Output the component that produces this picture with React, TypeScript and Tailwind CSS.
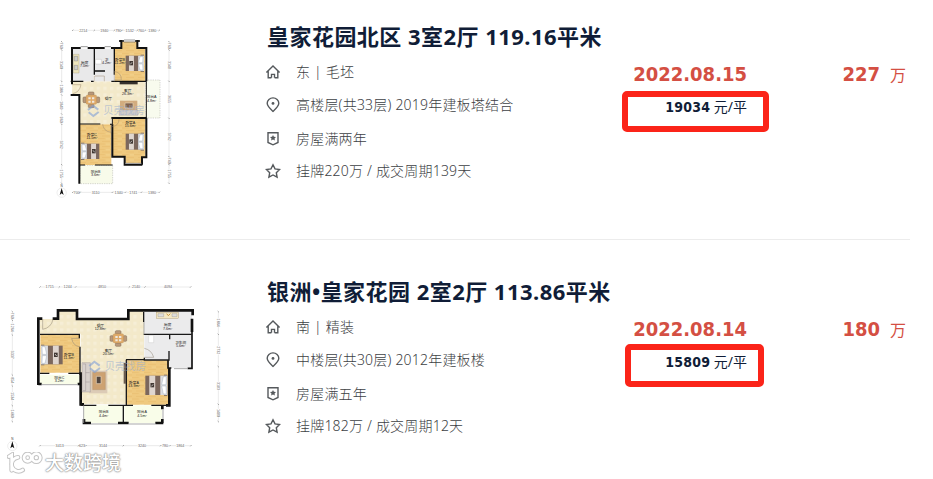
import React from "react";

type Listing = {
  title: string;
  orientation: string;
  floor: string;
  tenure: string;
  deal: string;
  date: string;
  unitPrice: string;
  total: string;
};

const first: Listing = {
  title: "皇家花园北区 3室2厅 119.16平米",
  orientation: "东 | 毛坯",
  floor: "高楼层(共33层) 2019年建板塔结合",
  tenure: "房屋满两年",
  deal: "挂牌220万 / 成交周期139天",
  date: "2022.08.15",
  unitPrice: "19034",
  total: "227",
};

const second: Listing = {
  title: "银洲•皇家花园 2室2厅 113.86平米",
  orientation: "南 | 精装",
  floor: "中楼层(共30层) 2012年建板楼",
  tenure: "房屋满五年",
  deal: "挂牌182万 / 成交周期12天",
  date: "2022.08.14",
  unitPrice: "15809",
  total: "180",
};

/* ---------- icons ---------- */

const iconClass = "h-4 w-4 shrink-0 fill-none stroke-[#55595c] stroke-[1.4]";

function HomeIcon() {
  return (
    <svg viewBox="0 0 16 16" className={iconClass}>
      <path d="M1.400 8.600 8 2l6.600 6.600M3.200 7.200v6.600h3.200M12.800 7.200v6.600H9.600M6.500 13.800v-3.400h3v3.400" />
    </svg>
  );
}

function PinIcon() {
  return (
    <svg viewBox="0 0 16 16" className={iconClass}>
      <path d="M8 14.400C4.600 11.300 2.200 9 2.200 6.300a5.800 5.400 0 0 1 11.600 0C13.800 9 11.400 11.300 8 14.400Z" />
      <circle cx="8" cy="6.400" r="1.400" fill="#55595c" stroke="none" />
    </svg>
  );
}

function BadgeIcon() {
  return (
    <svg viewBox="0 0 16 16" className={iconClass}>
      <path d="M3 1.700h10v9.800L8 13.800l-5-2.300Z" />
      <path d="m8 3.900.9 1.900 2.100.2-1.500 1.500.4 2.100L8 8.500l-1.900 1.100.4-2.100L5 6l2.100-.2Z" fill="#55595c" stroke="none" />
    </svg>
  );
}

function StarIcon() {
  return (
    <svg viewBox="0 0 16 16" className={iconClass}>
      <path d="m8 1.800 2 4.100 4.600.6-3.300 3.200.8 4.500L8 12l-4.100 2.200.8-4.500L1.400 6.500 6 5.900Z" />
    </svg>
  );
}

/* ---------- floor plan parts ---------- */

type Mark = [number, string];

// a dimension line: ticks at `stops`, one number between each pair
function Ruler({ stops, labels, at, vertical = false }: { stops: number[]; labels: Mark[]; at: number; vertical?: boolean }) {
  const from = stops[0];
  const to = stops[stops.length - 1];
  return (
    <g transform={vertical ? `translate(${at} 0) rotate(90)` : `translate(0 ${at})`}>
      <path d={`M${from} 0H${to}`} stroke="#d4d4d4" strokeWidth="1.5" />
      {labels.map(([x, text]) => (
        <g key={x}>
          <rect x={x - text.length * 3.2} y="-5" width={text.length * 6.4} height="10" fill="#fff" />
          <text x={x} y="4" textAnchor="middle" fontSize="11" fill="#666">{text}</text>
        </g>
      ))}
      {stops.map((x) => (
        <path key={x} d={`M${x - 2} 2l4-4`} stroke="#777" strokeWidth="1.8" />
      ))}
    </g>
  );
}

function Room({ x, y, name, area }: { x: number; y: number; name: string; area?: string }) {
  return (
    <g textAnchor="middle" fill="#222" fontSize="11">
      <text x={x} y={y}>{name}</text>
      {area && <text x={x} y={y + 10}>{area}</text>}
    </g>
  );
}

// pillows on the left; flip for beds against the right wall
function Bed({ x, y, w, h, flip = false }: { x: number; y: number; w: number; h: number; flip?: boolean }) {
  return (
    <g transform={flip ? `translate(${x + w} ${y}) scale(-1 1)` : `translate(${x} ${y})`}>
      <rect y="-3" width="10" height={h + 6} fill="#8b7966" />
      <rect width={w} height={h} fill="#7b675d" />
      <rect width={w * 0.32} height={h} fill="#dcdde0" />
      <path d={`M3 3h9l5 ${h / 2 - 5}H4ZM3 ${h - 3}h9l5 -${h / 2 - 5}H4Z`} fill="#fff" stroke="#8798aa" />
      <rect x={w * 0.55} width={w * 0.27} height={h} fill="#dfd6cf" />
      <rect x={w * 0.6} y={h / 2 - 7} width="11" height="13" fill="#413833" />
      <path d={`M${w * 0.6 + 3} ${h / 2 - 3}l5 6`} stroke="#fff" strokeWidth="2" />
    </g>
  );
}

function Dining({ x, y }: { x: number; y: number }) {
  return (
    <g transform={`translate(${x} ${y})`}>
      <g fill="#b8987a" stroke="#7d6650" strokeWidth="1.500">
        <rect x="-9" y="-23" width="17" height="10" rx="3" />
        <rect x="-9" y="14" width="17" height="10" rx="3" />
        <rect x="-25" y="-8" width="10" height="17" rx="3" />
        <rect x="15" y="-8" width="10" height="17" rx="3" />
      </g>
      <rect x="-16" y="-14" width="32" height="28" rx="5" fill="#dfaa69" stroke="#b08552" />
      <path d="M-9-7h7v6h-7ZM2-7h7v6H2ZM-9 3h7v6h-7ZM2 3h7v6H2Z" fill="#eee8df" />
    </g>
  );
}

function Watermark({ x, y }: { x: number; y: number }) {
  return (
    <g opacity="0.6">
      <path d={`M${x - 16} ${y - 2}l15-13 16 12M${x - 14} ${y + 5}l14 11 16-12`} fill="none" stroke="#7f9fd6" strokeWidth="6" />
      <text x={x + 30} y={y + 11} fontSize="31" fill="#9db1d0">贝壳找房</text>
    </g>
  );
}

function Compass({ x, y }: { x: number; y: number }) {
  return (
    <g>
      <text x={x} y={y - 14} fontSize="9" textAnchor="middle" fill="#333">N</text>
      <circle cx={x} cy={y + 4} r="14" fill="none" stroke="#ccc" />
      <path d={`M${x} ${y - 10}l6 21-6-5-6 5Z`} fill="#111" />
    </g>
  );
}

function Patterns({ id }: { id: string }) {
  return (
    <defs>
      <pattern id={`${id}-wood`} width="36" height="16" patternUnits="userSpaceOnUse">
        <rect width="36" height="16" fill="#efc97f" />
        <path d="M0 4h20M12 12h24" stroke="#eac074" strokeWidth="3" />
        <path d="M24 5h12" stroke="#f3d28d" strokeWidth="3" />
      </pattern>
      <pattern id={`${id}-tile`} width="20" height="20" patternUnits="userSpaceOnUse">
        <rect width="20" height="20" fill="#f3e9ca" />
        <path d="M0 0h10v10H0Z" fill="#f6eed6" />
        <path d="M0 20h20V0" fill="none" stroke="#f0e5c5" />
      </pattern>
    </defs>
  );
}

const planFont = "shrink-0 font-['Liberation_Sans','Noto_Sans_CJK_SC',sans-serif]";

function PlanNorth() {
  return (
    <svg viewBox="0 0 390 540" className={`h-[180px] w-[130px] ${planFont}`}>
      <Patterns id="n" />
      <Ruler at={31} stops={[68, 133, 193, 216, 262, 286, 328]} labels={[[100, "2214"], [163, "1940"], [205, "790"], [239, "1532"], [273, "760"], [307, "1380"]]} />
      <Ruler at={517} stops={[68, 90, 187, 226, 274, 328]} labels={[[80, "700"], [137, "3110"], [206, "1340"], [250, "1741"], [306, "1380"]]} />
      <Ruler vertical at={35} stops={[65, 90, 184, 225, 282, 313, 434, 490]} labels={[[77, "760"], [135, "3140"], [206, "1386"], [256, "1840"], [299, "960"], [374, "3742"], [461, "1755"]]} />
      <Ruler vertical at={357} stops={[65, 90, 184, 295, 410, 434, 490]} labels={[[77, "760"], [135, "3148"], [237, "3655"], [350, "3742"], [422, "740"], [461, "1755"]]} />
      <Compass x={35} y={514} />

      {/* balconies */}
      <path d="M287 180h43v114h-43Z" fill="#f8fbee" stroke="#888" strokeDasharray="4 3" />
      <path d="M90 436h98v55H90Z" fill="#f8fbea" stroke="#888" strokeDasharray="4 3" />

      {/* floors */}
      <path d="M66 184h220v112H185v16H90v-87H66Z" fill="url(#n-tile)" />
      <path d="M68 86h63v98H68ZM135 86h59v98h-59Z" fill="#e9e9ea" />
      <path d="M195 86h19V65h50v21h21v98h-90ZM90 313h94v122H90ZM187 296h99v118h-9v16h-51v-18h-39Z" fill="url(#n-wood)" />

      {/* walls */}
      <g fill="none" stroke="#111" strokeWidth="6">
        <path d="M66 193V84h26M113 84h51M183 84h31V63h-6M266 63h-4v21h27v100" />
        <path d="M62 225h26v266M289 293v119h-13v22M183 311v4M187 296v-2h102M187 313v97h37v24h53" />
        <path d="M208 63h14M255 63h15M133 84v80M193 84v80M131 153h34M131 184h-8M184 184h20M204 184h85M62 184h38" strokeWidth="4" />
        <path d="M88 312h63M90 435h15M135 435h53M187 294v20M289 184v110" strokeWidth="3" />
      </g>
      <path d="M92 80h21M164 80h19M222 60h33M226 430h48" stroke="#9b9b9b" strokeWidth="3" />
      <path d="M222 66h33" stroke="#5b5b5b" strokeWidth="2" />
      <path d="M133 184v-16h30v16M193 184v-30q22 4 21 26h-21M68 194h25q-4 23-25 27M158 312q2 22 25 25v-25M187 320q20-3 20-22" fill="none" stroke="#9e8b70" strokeWidth="1.500" />

      {/* furniture */}
      <path d="M70 103h17v56H70Z" fill="#ede5bd" stroke="#999075" />
      <path d="M73 109h10v14H73ZM73 136h10v13H73Z" fill="#ccc" stroke="#666" />
      <path d="M136 118h18v14h-18Z" fill="#fff" stroke="#aaa" />
      <Bed x={227} y={107} w={55} h={46} flip />
      <Bed x={93} y={371} w={55} h={46} />
      <Bed x={227} y={341} w={55} h={48} flip />
      <Dining x={124} y={239} />
      <path d="M209 186h54v7h-54Z" fill="#36302c" />
      <path d="M210 242h52v32h-52Z" fill="#d2ac7f" />
      <path d="M225 249h24v15h-24Z" fill="#80624f" stroke="#e4d1b7" strokeWidth="2" />
      <path d="M207 270h57v16h-57Z" fill="#d2cbc7" stroke="#a39a97" />

      <Room x={104} y={132} name="厨房" area="7.0m²" />
      <Room x={170} y={122} name="卫" area="4.2m²" />
      <Room x={210} y={123} name="卧室B" area="11.2m²" />
      <Room x={233} y={216} name="客厅" area="26.3m²" />
      <Room x={175} y={241} name="餐厅" />
      <Room x={305} y={235} name="阳台A" area="4.8m²" />
      <Room x={126} y={347} name="卧室C" area="11.5m²" />
      <Room x={241} y={311} name="卧室A" area="15.6m²" />
      <Room x={137} y={459} name="阳台B" area="3.6m²" />
      <Watermark x={130} y={272} />
    </svg>
  );
}

function PlanSouth() {
  return (
    <svg viewBox="0 0 720 612" className={`h-[204px] w-[240px] ${planFont}`}>
      <Patterns id="s" />
      <Ruler at={36} stops={[120, 178, 227, 388, 435, 572]} labels={[[149, "1715"], [203, "1244"], [306, "4810"], [408, "2140"], [504, "4094"]]} />
      <Ruler at={512} stops={[120, 236, 258, 370, 482, 510, 573]} labels={[[179, "3413"], [246, "623"], [309, "3144"], [426, "3240"], [495, "780"], [541, "1864"]]} />
      <Ruler vertical at={37} stops={[110, 136, 180, 300, 333, 392, 440]} labels={[[122, "760"], [158, "1264"], [239, "3337"], [316, "854"], [364, "1534"], [416, "1480"]]} />
      <Ruler vertical at={655} stops={[110, 178, 275, 388, 440]} labels={[[143, "1864"], [226, "2732"], [333, "3183"], [414, "1480"]]} />
      <Compass x={37} y={509} />

      {/* floors */}
      <path d="M120 132h57v-24h51v24h157v-26h47v146h-50v136H242V176H120Z" fill="url(#s-tile)" />
      <path d="M433 107h143v172h-68v-27h-75Z" fill="#ebebec" />
      <path d="M121 180h119v113H121ZM381 256h126v133H381Z" fill="url(#s-wood)" />
      <path d="M120 299h119v28H120ZM252 391h116v53H252ZM373 391h113v53H373Z" fill="#f9fde9" />

      {/* outer walls */}
      <g fill="none" stroke="#111" strokeWidth="8">
        <path d="M127 131h-12v199M158 131h16v-25h57v26h154v-26h193v15M576 131v40M508 279v112M242 292v96h10M498 391h14" />
        <path d="M576 165v115h-13M514 279h-10v-24" strokeWidth="5" />
        <path d="M115 327h10M233 327h9M248 444h25M354 444h32M466 444h24M487 391v12M487 432v12M252 432v12" />
      </g>
      <g fill="none" stroke="#191919" strokeWidth="4">
        <path d="M120 178h118v12M240 215v85M120 295h28M205 295h33M431 141v-30M431 178h78v15M507 228v27H433v-7M378 254h55M379 254v136M370 391v50M242 391h47M325 391h74M454 391h55M507 178h68" />
      </g>
      <g fill="none" stroke="#999" strokeWidth="2.500">
        <path d="M125 329h108M251 391v53M273 447h81M386 447h80M489 403v29M522 281h42M432 141v37" />
        <path d="M128 132v31q26-5 31-30M240 190h-25q3 22 25 26M433 220q22 5 28 27h-28" stroke="#8f8574" strokeWidth="1.500" />
      </g>

      {/* furniture */}
      <Bed x={123} y={212} w={65} h={56} />
      <Bed x={436} y={302} w={66} h={58} flip />
      <Dining x={355} y={190} />
      <rect x="469" y="112" width="66" height="18" fill="#f4e8c4" stroke="#9b8756" />
      <path d="M474 116h17v9h-17ZM516 116h15v9h-15Z" fill="#ddd" stroke="#888" />
      <path d="m500 116 5 6 6-6" fill="none" stroke="#ca973d" strokeWidth="3" />
      <path d="M446 181h15v22h-15Z" fill="#fff" stroke="#bbb" />
      <path d="M268 287h54v68h-54Z" fill="#dccbb6" />
      <path d="M278 292h38v52h-38Z" fill="#cda272" stroke="#ab8861" />
      <path d="M289 304h14v22h-14Z" fill="#534740" stroke="#ead8be" strokeWidth="2" />
      <path d="M246 263h25v88h-25Z" fill="#d8d1cc" stroke="#877d7b" />
      <path d="M249 267h8v80h-8M257 293h12M257 321h12" fill="none" stroke="#81777a" />
      <path d="M371 264h7v62h-7Z" fill="#6a5c50" />

      <Room x={301} y={155} name="餐厅" area="12.8m²" />
      <Room x={325} y={231} name="客厅" area="20.5m²" />
      <Room x={503} y={154} name="厨房" area="7.6m²" />
      <Room x={542} y={206} name="卫生间" area="5.6m²" />
      <Room x={207} y={243} name="卧室B" area="11.3m²" />
      <Room x={402} y={326} name="卧室A" area="13.9m²" />
      <Room x={178} y={311} name="阳台C" area="3.2m²" />
      <Room x={311} y={415} name="阳台B" area="4.4m²" />
      <Room x={426} y={415} name="阳台A" area="4.5m²" />
      <Watermark x={284} y={275} />
    </svg>
  );
}

/* ---------- rows ---------- */

function Details({ item }: { item: Listing }) {
  const rows = [
    { icon: <HomeIcon />, text: item.orientation, h: "h-8" },
    { icon: <PinIcon />, text: item.floor, h: "h-[34px]" },
    { icon: <BadgeIcon />, text: item.tenure, h: "h-[33px]" },
    { icon: <StarIcon />, text: item.deal, h: "h-8" },
  ];
  return (
    <div className="w-[356px] shrink-0">
      <h2 className="flex h-8 items-center whitespace-nowrap text-[22px] font-bold leading-8 tracking-[0.46px] text-[#101d37]">{item.title}</h2>
      <ul className="-ml-0.5 mt-1">
        {rows.map((row) => (
          <li key={row.text} className={`flex items-center gap-[15px] ${row.h}`}>
            {row.icon}
            <span className="whitespace-nowrap text-[14px] font-light leading-5 tracking-[0.2px] text-[#3d4144]">{row.text}</span>
          </li>
        ))}
      </ul>
    </div>
  );
}

function Price({ item, boxClass }: { item: Listing; boxClass: string }) {
  return (
    <>
      <div className="w-[146px] shrink-0 pt-[42px]">
        <p className="pr-[22px] text-right font-['DejaVu_Sans_Condensed','DejaVu_Sans',sans-serif] text-[20px] font-bold leading-6 text-[#d44f43] [font-stretch:condensed]">
          {item.date}
        </p>
        <div className={`rounded-[5px] border-[#fb2419] text-right text-[14px] leading-4 text-[#101d37] ${boxClass}`}>
          <b className="font-['DejaVu_Sans_Condensed','DejaVu_Sans',sans-serif] tracking-[0.2px] [font-stretch:condensed]">{item.unitPrice}</b> 元/平
        </div>
      </div>
      <div className="mt-[42px] flex h-6 w-[137px] shrink-0 items-baseline justify-end gap-[10px] text-[#d44f43]">
        <b className="font-['DejaVu_Sans_Condensed','DejaVu_Sans',sans-serif] text-[20px] leading-6 [font-stretch:condensed]">{item.total}</b>
        <span className="text-[16px] leading-6">万</span>
      </div>
    </>
  );
}

export default function App() {
  return (
    <main className="relative h-[479px] w-[933px] overflow-hidden bg-white font-['Noto_Sans','Noto_Sans_CJK_SC',sans-serif]">
      <section className="flex h-60 w-[910px] border-b border-[#ececec] pt-5">
        <div className="w-[267px] shrink-0 pl-[50px]">
          <PlanNorth />
        </div>
        <Details item={first} />
        <Price item={first} boxClass="-ml-px mt-[5px] h-[41px] w-[147px] border-[6px] pr-4 pt-[2px]" />
      </section>

      <section className="flex h-[239px] w-[910px] pt-[35px]">
        <div className="w-[267px] shrink-0">
          <PlanSouth />
        </div>
        <Details item={second} />
        <Price item={second} boxClass="ml-[2px] mt-[3px] h-[43px] w-[139px] border-[6px] pr-[11px] pt-1" />
      </section>

      {/* site mark over the corner of the plan */}
      <div className="absolute left-[7px] top-[447px] flex items-center">
        <svg viewBox="0 0 108 66" className="h-[22px] w-9 fill-none">
          <g stroke="#c4c4c4" strokeWidth="14" strokeLinecap="round">
            <path d="M6 14 14 9v46M47 54a21 21 0 1 1-14-38" />
            <circle cx="62" cy="17" r="11" />
            <circle cx="88" cy="17" r="12" />
          </g>
          <g stroke="#fff" strokeWidth="8" strokeLinecap="round">
            <path d="M6 14 14 9v46M47 54a21 21 0 1 1-14-38" />
            <circle cx="62" cy="17" r="11" />
            <circle cx="88" cy="17" r="12" />
          </g>
        </svg>
        <span className="ml-0.5 text-[19px] font-medium leading-8 text-white [text-shadow:0_0_1px_#888,0_0_2px_#999,0_0_2px_#aaa]">大数跨境</span>
      </div>
    </main>
  );
}
